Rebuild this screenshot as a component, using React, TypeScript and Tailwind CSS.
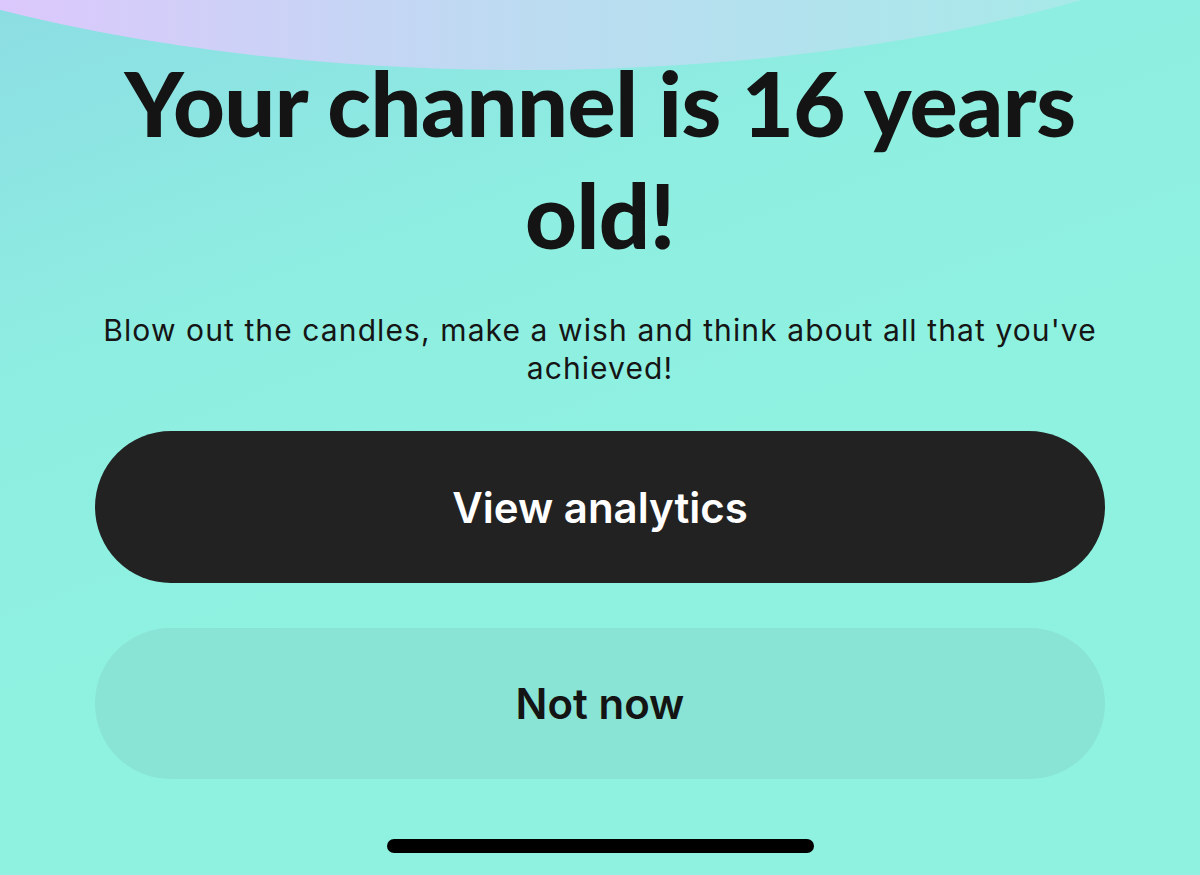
import React from "react";

const App = () => {
  return (
    <div className="relative h-[875px] w-[1200px] overflow-hidden bg-[linear-gradient(160deg,#8cdde3_0%,#8eeee1_30%,#8ff2e0_60%,#8ff2e0_100%)] font-['Inter',sans-serif]">
      {/* top decoration */}
      <div className="absolute left-[-377px] top-[-578px] h-[648px] w-[1800px] rounded-[50%] bg-[linear-gradient(90deg,#e4c4ff_0%,#dcc8fc_21%,#bcdbf1_50%,#a5ebe8_84%,#9ff0e4_100%)]" />

      <div className="relative flex flex-col items-center px-[95px] pt-[46px]">
        <h1 className="w-[1000px] text-center font-['Lato',sans-serif] text-[90px] font-black leading-[112px] tracking-[-0.5px] text-[#141414]">
          Your channel is 16 years old!
        </h1>
        <p className="mt-[41px] w-[1040px] text-center text-[30px] leading-[38px] tracking-[1.1px] text-[#151515]">
          Blow out the candles, make a wish and think about all that you've achieved!
        </p>

        <div className="mt-[44px] flex w-full flex-col gap-[45px]">
          <button className="flex h-[152px] w-full items-center justify-center rounded-full bg-[#222222] text-[42px] font-semibold text-white">
            View analytics
          </button>
          <button className="flex h-[151px] w-full items-center justify-center rounded-full bg-[#89e4d5] text-[42px] font-semibold text-[#141414]">
            Not now
          </button>
        </div>

        <div className="mt-[60px] h-[14px] w-[427px] rounded-full bg-black" />
      </div>
    </div>
  );
};

export default App;
